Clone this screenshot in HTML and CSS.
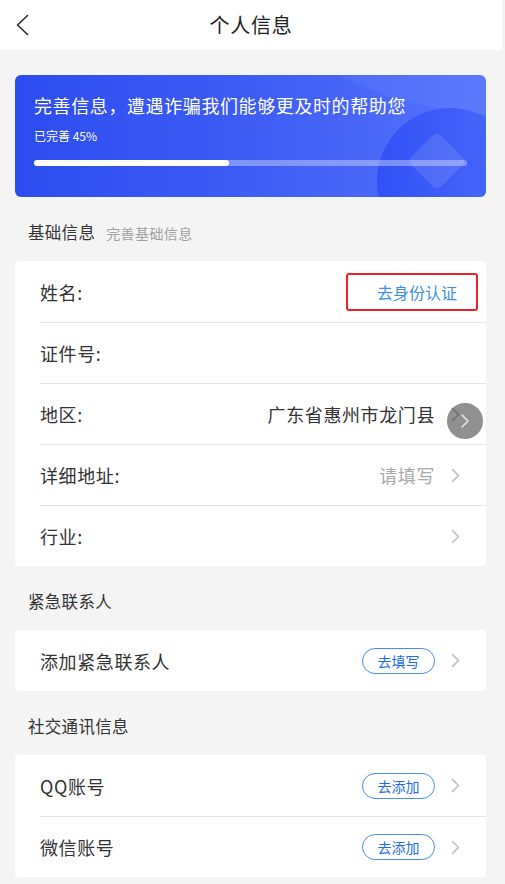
FILE: index.html
```html
<!DOCTYPE html>
<html lang="zh-CN">
<head>
<meta charset="utf-8">
<title>个人信息</title>
<link rel="stylesheet" href="styles.css">
</head>
<body>
<div class="page">
  <header class="topbar">
    <span class="back">
      <svg width="14" height="22" viewBox="0 0 14 22"><path d="M12.5 1.5 L2.5 11 L12.5 20.5" fill="none" stroke="#2a2a2a" stroke-width="1.6" stroke-linecap="round" stroke-linejoin="round"/></svg>
    </span>
    <h1 class="title">个人信息</h1>
    <span></span>
  </header>

  <section class="banner">
    <div class="banner-deco-wave"></div>
    <div class="banner-deco-circle"></div>
    <div class="banner-deco-diamond"></div>
    <div class="banner-title">完善信息，遭遇诈骗我们能够更及时的帮助您</div>
    <div class="banner-sub">已完善 45%</div>
    <div class="progress"><div class="progress-fill" style="width:45%"></div></div>
  </section>

  <div class="section-head"><span class="section-title">基础信息</span><span class="section-sub">完善基础信息</span></div>
  <div class="card">
    <div class="row row-name">
      <span class="label">姓名:</span>
      <span class="verify">去身份认证</span>
    </div>
    <div class="row">
      <span class="label">证件号:</span>
    </div>
    <div class="row">
      <span class="label">地区:</span>
      <span class="right"><span class="value">广东省惠州市龙门县</span><svg class="chev dark" width="9" height="15" viewBox="0 0 9 15"><path d="M1.5 1.5 L7.5 7.5 L1.5 13.5" fill="none" stroke="currentColor" stroke-width="1.6" stroke-linecap="round" stroke-linejoin="round"/></svg></span>
      <span class="float-btn"><svg width="10" height="16" viewBox="0 0 10 16"><path d="M2 2 L8 8 L2 14" fill="none" stroke="#e6e6e6" stroke-width="1.5" stroke-linecap="round" stroke-linejoin="round"/></svg></span>
    </div>
    <div class="row">
      <span class="label">详细地址:</span>
      <span class="right"><span class="value placeholder">请填写</span><svg class="chev" width="9" height="15" viewBox="0 0 9 15"><path d="M1.5 1.5 L7.5 7.5 L1.5 13.5" fill="none" stroke="currentColor" stroke-width="1.6" stroke-linecap="round" stroke-linejoin="round"/></svg></span>
    </div>
    <div class="row">
      <span class="label">行业:</span>
      <span class="right"><svg class="chev" width="9" height="15" viewBox="0 0 9 15"><path d="M1.5 1.5 L7.5 7.5 L1.5 13.5" fill="none" stroke="currentColor" stroke-width="1.6" stroke-linecap="round" stroke-linejoin="round"/></svg></span>
    </div>
  </div>

  <div class="section-head"><span class="section-title">紧急联系人</span></div>
  <div class="card">
    <div class="row">
      <span class="label">添加紧急联系人</span>
      <span class="right"><span class="pill">去填写</span><svg class="chev" width="9" height="15" viewBox="0 0 9 15"><path d="M1.5 1.5 L7.5 7.5 L1.5 13.5" fill="none" stroke="currentColor" stroke-width="1.6" stroke-linecap="round" stroke-linejoin="round"/></svg></span>
    </div>
  </div>

  <div class="section-head"><span class="section-title">社交通讯信息</span></div>
  <div class="card">
    <div class="row">
      <span class="label">QQ账号</span>
      <span class="right"><span class="pill">去添加</span><svg class="chev" width="9" height="15" viewBox="0 0 9 15"><path d="M1.5 1.5 L7.5 7.5 L1.5 13.5" fill="none" stroke="currentColor" stroke-width="1.6" stroke-linecap="round" stroke-linejoin="round"/></svg></span>
    </div>
    <div class="row">
      <span class="label">微信账号</span>
      <span class="right"><span class="pill">去添加</span><svg class="chev" width="9" height="15" viewBox="0 0 9 15"><path d="M1.5 1.5 L7.5 7.5 L1.5 13.5" fill="none" stroke="currentColor" stroke-width="1.6" stroke-linecap="round" stroke-linejoin="round"/></svg></span>
    </div>
  </div>
</div>
</body>
</html>
```

FILE: styles.css
```css
* { box-sizing: border-box; }
html, body {
  margin: 0;
  padding: 0;
  background: #f4f4f4;
  font-family: "Noto Sans CJK SC", "Noto Sans", sans-serif;
  color: #333;
}
.page {
  width: 502px;
  min-height: 884px;
  background: #f4f4f4;
}
.topbar {
  height: 50px;
  background: #fff;
  display: grid;
  grid-template-columns: 50px 1fr 50px;
  align-items: center;
}
.back {
  display: flex;
  align-items: center;
  padding-left: 15px;
  height: 50px;
}
.title {
  margin: 0;
  text-align: center;
  font-size: 20px;
  font-weight: 400;
  letter-spacing: 0.8px;
  color: #222;
  line-height: 50px;
}
.banner {
  position: relative;
  overflow: hidden;
  margin: 25px 16px 0 15px;
  height: 122px;
  border-radius: 6px;
  background: linear-gradient(90deg, #2d4cf0 0%, #3f5ef5 55%, #5574fb 100%);
  padding: 17px 19px 0;
  color: #fff;
}
.banner-deco-wave {
  position: absolute;
  left: 240px;
  top: -260px;
  width: 520px;
  height: 300px;
  border-radius: 50%;
  background: rgba(255,255,255,0.045);
}
.banner-deco-circle {
  position: absolute;
  left: 362px;
  top: 33px;
  width: 146px;
  height: 146px;
  border-radius: 50%;
  background: linear-gradient(90deg, #3151f6, #4b6afa);
}
.banner-deco-diamond {
  position: absolute;
  left: 401px;
  top: 65px;
  width: 42px;
  height: 42px;
  border-radius: 6px;
  transform: rotate(45deg);
  background: rgba(255,255,255,0.11);
}
.banner-title {
  position: relative;
  font-size: 18px;
  line-height: 26px;
  letter-spacing: 0.6px;
}
.banner-sub {
  position: relative;
  margin-top: 9px;
  font-size: 12px;
  line-height: 17px;
}
.progress {
  position: relative;
  margin-top: 16px;
  width: 433px;
  height: 6px;
  border-radius: 3px;
  background: rgba(255,255,255,0.35);
}
.progress-fill {
  height: 6px;
  border-radius: 3px;
  background: #fff;
}
.section-head {
  height: 64px;
  padding: 24px 28px 0;
  line-height: 22px;
  display: flex;
  align-items: baseline;
  gap: 11px;
}
.section-title {
  font-size: 16.5px;
  color: #333;
  letter-spacing: 0.3px;
}
.section-sub {
  font-size: 14px;
  color: #a0a0a0;
  letter-spacing: 0.4px;
}
.card {
  position: relative;
  margin: 0 16px 0 15px;
  background: #fff;
  border-radius: 3px;
  padding-left: 25px;
}
.row {
  height: 61px;
  display: flex;
  align-items: center;
  justify-content: space-between;
  padding-right: 26px;
  border-top: 1px solid #e4e4e4;
}
.row:first-child { border-top: none; }
.label {
  font-size: 18px;
  letter-spacing: 0.6px;
  color: #333;
}
.right {
  display: flex;
  align-items: center;
  gap: 16px;
}
.value {
  font-size: 18px;
  letter-spacing: 0.6px;
  color: #333;
}
.value.placeholder { color: #aaa; }
.chev { color: #bdbdbd; display: block; }
.chev.dark { color: #555; }
.row-name { padding-right: 8px; }
.verify {
  width: 132px;
  height: 38px;
  border: 2px solid #e8232a;
  border-radius: 3px;
  display: flex;
  align-items: center;
  justify-content: flex-end;
  padding-right: 19px;
  font-size: 16px;
  color: #3d8fe4;
}
.pill {
  width: 73px;
  height: 26px;
  border: 1px solid #4b8cef;
  border-radius: 13px;
  display: flex;
  align-items: center;
  justify-content: center;
  font-size: 14px;
  color: #1f6be3;
}
.float-btn {
  position: absolute;
  left: 432px;
  top: 142px;
  width: 36px;
  height: 36px;
  border-radius: 50%;
  background: rgba(120,120,120,0.82);
  display: flex;
  align-items: center;
  justify-content: center;
}
```
